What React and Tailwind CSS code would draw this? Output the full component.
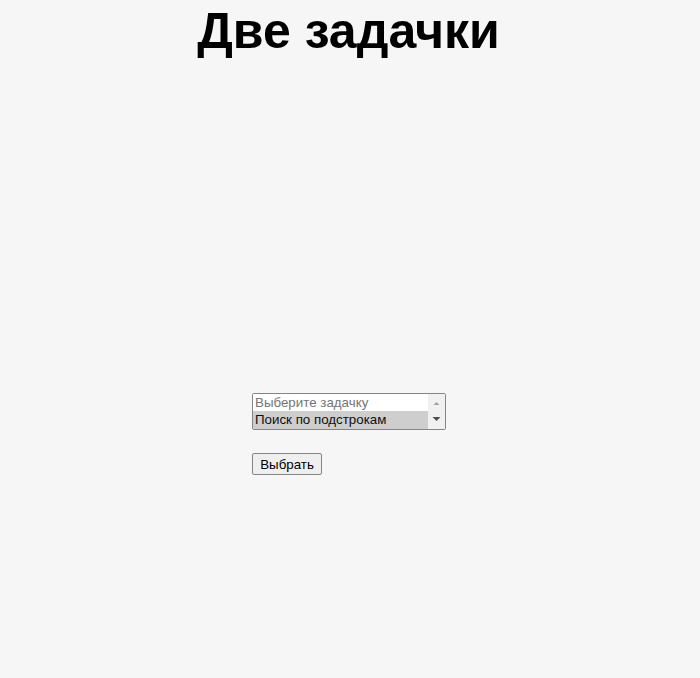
const tasks = [
  { title: "Выберите задачку", className: "h-[17px] bg-white text-[#757575]" },
  { title: "Поиск по подстрокам", className: "h-[18px] bg-[#cecece] text-[#101010]" },
];

function ScrollBar() {
  return (
    <div className="flex w-[17px] shrink-0 flex-col bg-[#f1f1f1]">
      <svg className="h-[17px] w-[17px]" viewBox="0 0 17 17" fill="#a3a3a3">
        <path d="M5.5 11h6L8.5 8z" />
      </svg>
      <svg className="h-[17px] w-[17px]" viewBox="0 0 17 17" fill="#505050">
        <path d="M4.5 6h8L8.5 10z" />
      </svg>
    </div>
  );
}

export default function App() {
  return (
    <main className="flex h-[678px] w-[700px] flex-col overflow-hidden bg-[#f6f6f6] font-['Liberation_Sans',Arial,sans-serif] text-black">
      <h1 className="h-[393px] pt-px pr-[3px] text-center text-[50px] leading-[60px] font-bold">Две задачки</h1>
      <div className="ml-[252px] flex flex-col items-start gap-[23px]">
        <div className="flex h-[37px] w-[194px] rounded-[2px] border border-[#858585] bg-white">
          <ul className="grow text-[13.333px] leading-[17px]">
            {tasks.map((t) => (
              <li key={t.title} className={`pl-[2px] whitespace-nowrap ${t.className}`}>
                {t.title}
              </li>
            ))}
          </ul>
          <ScrollBar />
        </div>
        <button className="h-[22px] w-[70px] rounded-[2px] border border-[#858585] bg-[#efefef] pt-px text-[13.333px] leading-[20px] whitespace-nowrap">
          Выбрать
        </button>
      </div>
    </main>
  );
}
